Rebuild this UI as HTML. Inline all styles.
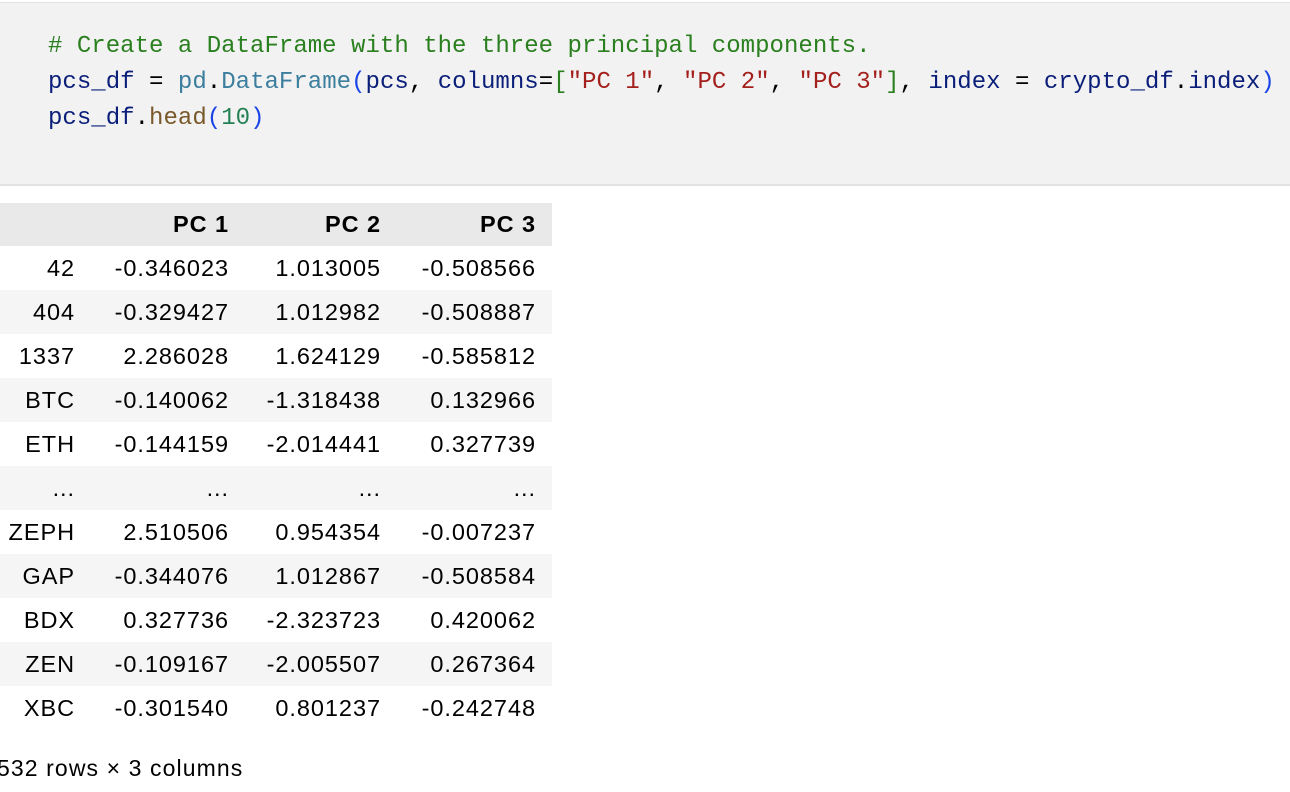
<!DOCTYPE html>
<html><head><meta charset="utf-8"><style>
html,body{margin:0;padding:0;background:#fff;width:1290px;height:792px;overflow:hidden;position:relative}
.code{position:absolute;left:0;top:2px;width:1290px;height:181px;background:#f2f2f2;border-top:1px solid #e2e2e2;border-bottom:2px solid #e2e2e2}
.code pre{margin:0;position:absolute;left:48px;top:26px;font-family:"Liberation Mono",monospace;font-size:24.05px;line-height:36px;color:#000}
.c{color:#2a7f1f}.n{color:#0b1f7a}.m{color:#3b7e9e}.s{color:#a3201c}.gr{color:#2a7f1f}.f{color:#7a5a2a}.d{color:#248156}.p{color:#1a44e6}
table{position:absolute;left:0;top:203px;border-collapse:collapse;table-layout:fixed;font-family:"Liberation Sans",sans-serif;font-size:23.5px;letter-spacing:0.95px;color:#000;width:552px}
td,th{height:44px;padding:0 16px 0 0;text-align:right;white-space:nowrap;overflow:visible}
th{background:#e9e9e9;font-weight:bold;height:43px}
tr.z td{background:#f5f5f5}
.foot{position:absolute;left:-3px;top:755px;font-family:"Liberation Sans",sans-serif;font-size:23px;letter-spacing:1.1px;color:#000}
</style></head><body>
<div class="code"><pre><span class="c"># Create a DataFrame with the three principal components.</span>
<span class="n">pcs_df</span> = <span class="m">pd</span>.<span class="m">DataFrame</span><span class="p">(</span><span class="n">pcs</span>, <span class="n">columns</span>=<span class="gr">[</span><span class="s">"PC 1"</span>, <span class="s">"PC 2"</span>, <span class="s">"PC 3"</span><span class="gr">]</span>, <span class="n">index</span> = <span class="n">crypto_df</span>.<span class="n">index</span><span class="p">)</span>
<span class="n">pcs_df</span>.<span class="f">head</span><span class="p">(</span><span class="d">10</span><span class="p">)</span></pre></div>
<table>
<colgroup><col style="width:91px"><col style="width:154px"><col style="width:152px"><col style="width:155px"></colgroup>
<tr><th></th><th>PC 1</th><th>PC 2</th><th>PC 3</th></tr>
<tr><td>42</td><td>-0.346023</td><td>1.013005</td><td>-0.508566</td></tr>
<tr class="z"><td>404</td><td>-0.329427</td><td>1.012982</td><td>-0.508887</td></tr>
<tr><td>1337</td><td>2.286028</td><td>1.624129</td><td>-0.585812</td></tr>
<tr class="z"><td>BTC</td><td>-0.140062</td><td>-1.318438</td><td>0.132966</td></tr>
<tr><td>ETH</td><td>-0.144159</td><td>-2.014441</td><td>0.327739</td></tr>
<tr class="z"><td>...</td><td>...</td><td>...</td><td>...</td></tr>
<tr><td>ZEPH</td><td>2.510506</td><td>0.954354</td><td>-0.007237</td></tr>
<tr class="z"><td>GAP</td><td>-0.344076</td><td>1.012867</td><td>-0.508584</td></tr>
<tr><td>BDX</td><td>0.327736</td><td>-2.323723</td><td>0.420062</td></tr>
<tr class="z"><td>ZEN</td><td>-0.109167</td><td>-2.005507</td><td>0.267364</td></tr>
<tr><td>XBC</td><td>-0.301540</td><td>0.801237</td><td>-0.242748</td></tr>
</table>
<div class="foot">532 rows × 3 columns</div>
</body></html>
